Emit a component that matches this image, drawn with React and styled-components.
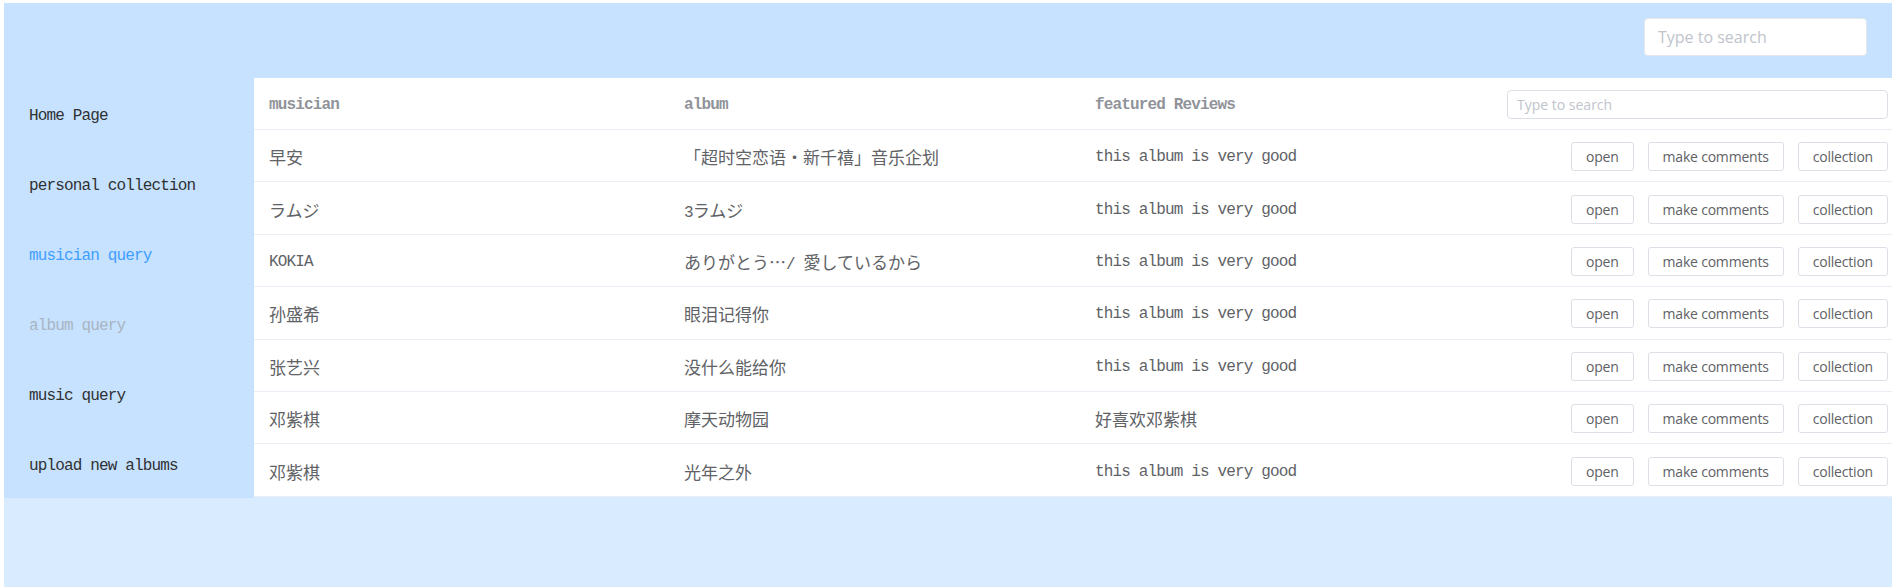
import React from "react";
import styled, { createGlobalStyle } from "styled-components";

const GlobalStyle = createGlobalStyle`
  body {
    margin: 0;
    background: #fff;
  }
`;

const navItems = [
  { label: "Home Page" },
  { label: "personal collection" },
  { label: "musician query", state: "active" },
  { label: "album query", state: "disabled" },
  { label: "music query" },
  { label: "upload new albums" },
];

const good = "this album is very good";

const albums = [
  ["早安", "「超时空恋语・新千禧」音乐企划", good],
  ["ラムジ", "3ラムジ", good],
  ["KOKIA", "ありがとう…/ 愛しているから", good],
  ["孙盛希", "眼泪记得你", good],
  ["张艺兴", "没什么能给你", good],
  ["邓紫棋", "摩天动物园", "好喜欢邓紫棋"],
  ["邓紫棋", "光年之外", good],
];

// latin runs use the mono face, everything else the CJK face
const Mixed = ({ text }) =>
  text
    .split(/([\u0000-\u00ff]+)/)
    .filter(Boolean)
    .map((part, i) =>
      /^[\u0000-\u00ff]+$/.test(part) ? (
        <Latin key={i}>{part}</Latin>
      ) : (
        <Cjk key={i}>{part}</Cjk>
      )
    );

const App = () => {
  return (
    <>
      <GlobalStyle />
      <Page>
        <TopBar>
          <TopSearch placeholder="Type to search" />
        </TopBar>
        <Main>
          <Sidebar>
            {navItems.map((item) => (
              <NavItem key={item.label} $state={item.state}>
                {item.label}
              </NavItem>
            ))}
          </Sidebar>
          <Table>
            <HeadRow>
              <HeadCell>musician</HeadCell>
              <HeadCell>album</HeadCell>
              <HeadCell>featured Reviews</HeadCell>
              <ActionCell>
                <TableSearch placeholder="Type to search" />
              </ActionCell>
            </HeadRow>
            {albums.map(([musician, album, review], i) => (
              <Row key={i}>
                <Cell>
                  <Mixed text={musician} />
                </Cell>
                <Cell>
                  <Mixed text={album} />
                </Cell>
                <Cell>
                  <Mixed text={review} />
                </Cell>
                <ActionCell>
                  <Button>open</Button>
                  <Button>make comments</Button>
                  <Button>collection</Button>
                </ActionCell>
              </Row>
            ))}
          </Table>
        </Main>
      </Page>
    </>
  );
};

export default App;

const Page = styled.div`
  margin: 3px 3px 0 4px;
  min-height: calc(100vh - 3px);
  background: #d9ecff;
  display: flex;
  flex-direction: column;
`;

const TopBar = styled.div`
  height: 75px;
  box-sizing: border-box;
  padding: 15px 25px 0 0;
  background: #c6e2ff;
  display: flex;
  justify-content: flex-end;
  align-items: flex-start;
`;

const TopSearch = styled.input`
  width: 223px;
  height: 38px;
  box-sizing: border-box;
  padding: 0 13px;
  border: 1px solid #e4e7ed;
  border-radius: 4px;
  background: #fff;
  font-family: "Open Sans", sans-serif;
  font-size: 16px;
  color: #606266;
  outline: none;

  &::placeholder {
    color: #c0c4cc;
  }
`;

const Main = styled.div`
  display: flex;
  align-items: flex-start;
`;

const Sidebar = styled.nav`
  width: 250px;
  flex-shrink: 0;
  background: #c6e2ff;
`;

const NavItem = styled.div`
  height: 70px;
  box-sizing: border-box;
  padding: 5px 0 0 25px;
  display: flex;
  align-items: center;
  font-family: "Liberation Mono", monospace;
  font-size: 16px;
  letter-spacing: -0.85px;
  cursor: pointer;
  color: ${({ $state }) =>
    $state === "active" ? "#409eff" : $state === "disabled" ? "#a9b4c2" : "#303133"};
`;

const Table = styled.div`
  flex: 1;
  background: #fff;
`;

const HeadRow = styled.div`
  display: grid;
  grid-template-columns: 415px 411px 412px 1fr;
  align-items: center;
  height: 52px;
  box-sizing: border-box;
  padding-top: 2px;
  border-bottom: 1px solid #ebeef5;
`;

const Row = styled(HeadRow)`
  height: 52.4px;
`;

const Cell = styled.div`
  padding-left: 15px;
  color: #606266;
  white-space: nowrap;
`;

const HeadCell = styled(Cell)`
  font-family: "Liberation Mono", monospace;
  font-size: 16px;
  font-weight: bold;
  letter-spacing: -0.85px;
  color: #909399;
`;

const ActionCell = styled.div`
  display: flex;
  justify-content: flex-end;
  gap: 14px;
  padding: 0 4px 0 15px;
`;

const Latin = styled.span`
  font-family: "Liberation Mono", monospace;
  font-size: 16px;
  letter-spacing: -0.85px;
`;

const Cjk = styled.span`
  font-family: "Noto Sans CJK SC", "Noto Sans CJK JP", sans-serif;
  font-size: 17px;
`;

const TableSearch = styled.input`
  width: 100%;
  height: 29px;
  box-sizing: border-box;
  padding: 0 9px;
  border: 1px solid #dcdfe6;
  border-radius: 4px;
  font-family: "Open Sans", sans-serif;
  font-size: 14px;
  color: #606266;
  outline: none;

  &::placeholder {
    color: #c0c4cc;
  }
`;

const Button = styled.button`
  height: 29px;
  padding: 0 14px;
  border: 1px solid #dcdfe6;
  border-radius: 3px;
  background: #fff;
  font-family: "Open Sans", sans-serif;
  font-size: 14px;
  letter-spacing: -0.2px;
  color: #606266;
  cursor: pointer;
`;
